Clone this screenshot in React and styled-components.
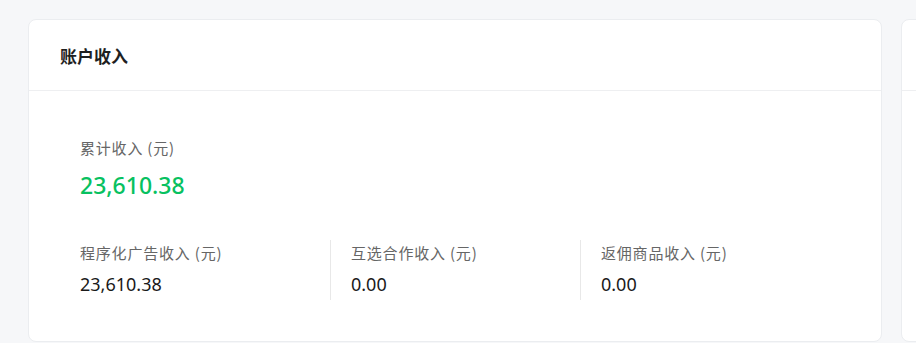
import React from "react";
import styled, { createGlobalStyle } from "styled-components";

const Global = createGlobalStyle`
  html, body { margin: 0; padding: 0; background: #f6f7f9; }
  body { font-family: "Noto Sans", "Noto Sans CJK SC", sans-serif; }
`;

const Page = styled.div`
  display: flex;
  gap: 19px;
  padding: 19px 0 0 28px;
  width: 916px;
  height: 343px;
  box-sizing: border-box;
  overflow: hidden;
`;

const Card = styled.section`
  flex: 0 0 ${(p) => p.$w}px;
  height: 323px;
  background: #fff;
  border: 1px solid #ebedf0;
  border-radius: 8px;
  box-sizing: border-box;
  display: flex;
  flex-direction: column;
`;

const CardHeader = styled.header`
  height: 71px;
  flex: 0 0 71px;
  display: flex;
  align-items: center;
  padding: 0 31px;
  border-bottom: 1px solid #eeeff1;
  box-sizing: border-box;
`;

const Title = styled.h2`
  margin: 0;
  font-size: 17px;
  font-weight: 700;
  color: #1f1f1f;
  font-family: "Noto Sans CJK SC", sans-serif;
`;

const CardBody = styled.div`
  padding: 46px 51px 0;
  display: flex;
  flex-direction: column;
`;

const Label = styled.div`
  font-size: 15px;
  line-height: 22px;
  letter-spacing: 0.8px;
  color: #666;
  font-family: "Noto Sans CJK SC", sans-serif;
`;

const Total = styled.div`
  margin-top: 11px;
  font-size: 23px;
  line-height: 30px;
  font-weight: 500;
  color: #07c160;
  font-family: "Noto Sans", sans-serif;
`;

const Grid = styled.div`
  margin-top: 40px;
  display: grid;
  grid-template-columns: repeat(3, 250px);
`;

const Cell = styled.div`
  display: flex;
  flex-direction: column;
  gap: 8px;
  padding: 2px 0 0 ${(p) => (p.$first ? 0 : 20)}px;
  height: 60px;
  box-sizing: border-box;
  border-left: ${(p) => (p.$first ? "none" : "1px solid #e8e8e8")};
`;

const Value = styled.div`
  font-size: 18px;
  line-height: 24px;
  color: #1a1a1a;
  font-family: "Noto Sans", sans-serif;
`;

const items = [
  { label: "程序化广告收入 (元)", value: "23,610.38" },
  { label: "互选合作收入 (元)", value: "0.00" },
  { label: "返佣商品收入 (元)", value: "0.00" },
];

export default function App() {
  return (
    <>
      <Global />
      <Page>
        <Card $w={854}>
          <CardHeader>
            <Title>账户收入</Title>
          </CardHeader>
          <CardBody>
            <Label>累计收入 (元)</Label>
            <Total>23,610.38</Total>
            <Grid>
              {items.map((it, i) => (
                <Cell key={it.label} $first={i === 0}>
                  <Label>{it.label}</Label>
                  <Value>{it.value}</Value>
                </Cell>
              ))}
            </Grid>
          </CardBody>
        </Card>
        <Card $w={300}>
          <CardHeader />
        </Card>
      </Page>
    </>
  );
}
